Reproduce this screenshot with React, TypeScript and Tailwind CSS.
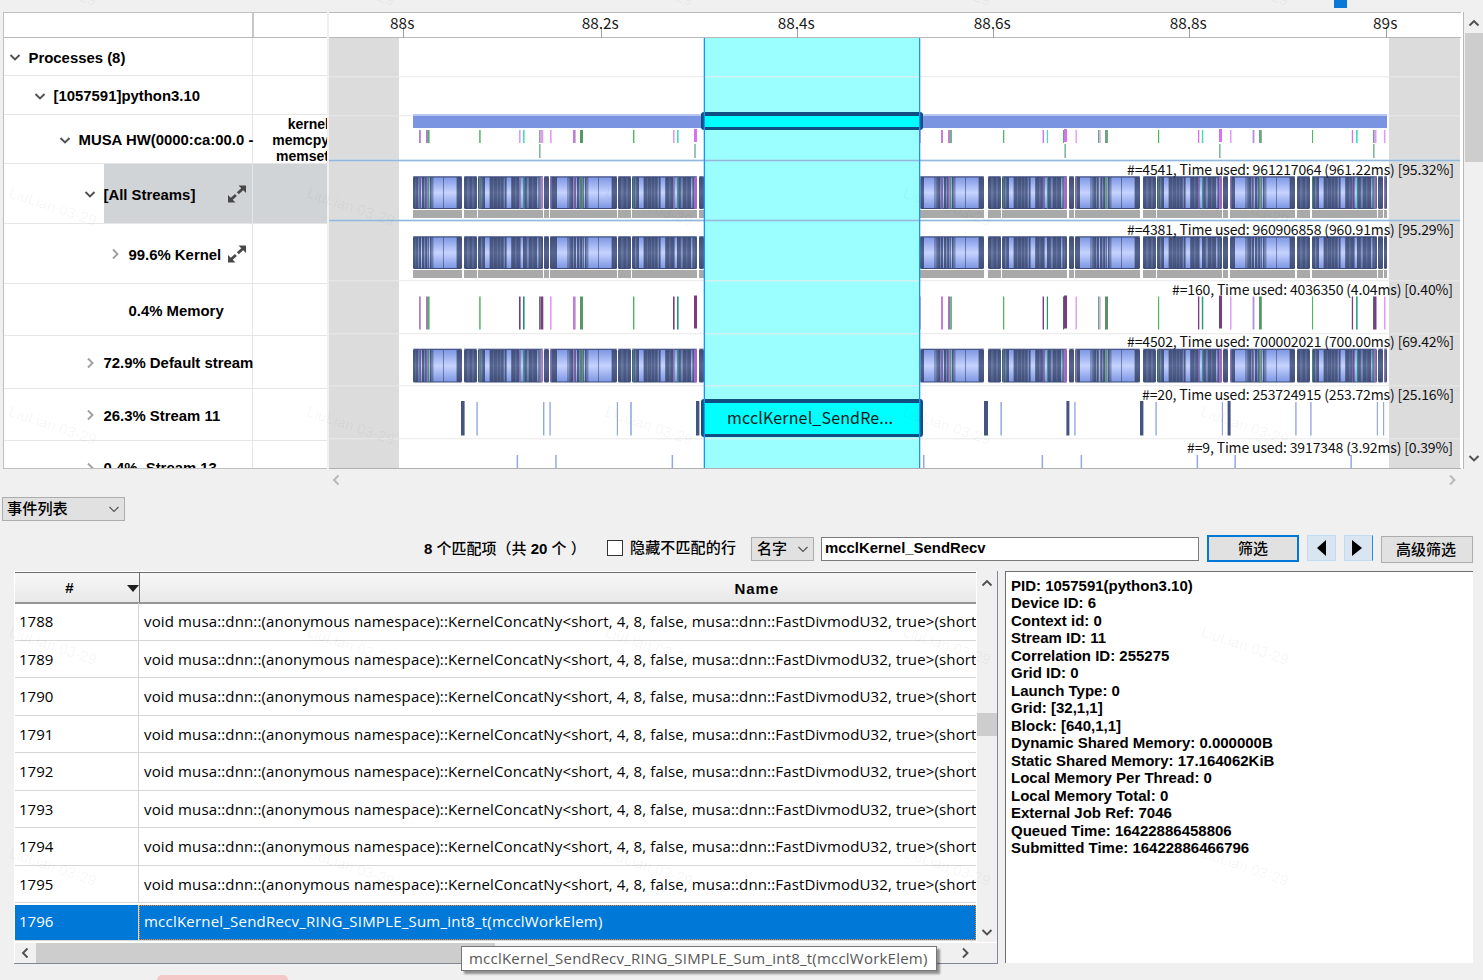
import React, { useState } from "react";

const bold = "font-['Liberation_Sans','Noto_Sans_CJK_SC',sans-serif] font-bold";
const segoe = "font-['Open_Sans','Noto_Sans_CJK_SC',sans-serif]";
const cjk = "font-['Liberation_Sans','Noto_Sans_CJK_SC',sans-serif]";

/* ---------- icons ---------- */

const chevronPaths = {
  down: "M1.5 4 L6 8.5 L10.5 4",
  up: "M1.5 8.5 L6 4 L10.5 8.5",
  left: "M8.5 1.5 L4 6 L8.5 10.5",
  right: "M4 1.5 L8.5 6 L4 10.5",
};

const Chevron: React.FC<{
  dir: keyof typeof chevronPaths;
  color?: string;
  width?: number;
}> = ({ dir, color = "#505050", width = 1.9 }) => (
  <svg width="12" height="12" viewBox="0 0 12 12" className="shrink-0">
    <path d={chevronPaths[dir]} fill="none" stroke={color} strokeWidth={width} />
  </svg>
);

const ExpandIcon = () => (
  <svg width="18" height="18" viewBox="0 0 18 18" className="shrink-0">
    <path d="M10.5 0.5 H18 V8 Z" fill="#484848" />
    <path d="M0 10 L7.5 17.5 H0 Z" fill="#484848" />
    <path d="M15 3.5 L3 14.5" stroke="#484848" strokeWidth="2.8" strokeDasharray="7 2.6" />
  </svg>
);

/* ---------- tree ---------- */

type TreeRow = {
  label: string;
  height: string;
  indent: string;
  arrow?: "down" | "right";
  selected?: boolean;
  expand?: boolean;
  tags?: string[];
};

const treeRows: TreeRow[] = [
  { label: "Processes (8)", height: "h-[38px]", indent: "pl-[5px]", arrow: "down" },
  { label: "[1057591]python3.10", height: "h-[39px]", indent: "pl-[30px]", arrow: "down" },
  {
    label: "MUSA HW(0000:ca:00.0 -",
    height: "h-[49px]",
    indent: "pl-[55px]",
    arrow: "down",
    tags: ["kernel", "memcpy", "memset"],
  },
  { label: "[All Streams]", height: "h-[60px]", indent: "pl-[80px]", arrow: "down", selected: true, expand: true },
  { label: "99.6% Kernel", height: "h-[60px]", indent: "pl-[105px]", arrow: "right", expand: true },
  { label: "0.4% Memory", height: "h-[52px]", indent: "pl-[105px]" },
  { label: "72.9% Default stream", height: "h-[53px]", indent: "pl-[80px]", arrow: "right" },
  { label: "26.3% Stream 11", height: "h-[52px]", indent: "pl-[80px]", arrow: "right" },
  { label: "0.4%  Stream 13", height: "h-[53px]", indent: "pl-[80px]", arrow: "right" },
];

const Tree = () => (
  <div className="w-[324px] h-[457px] ml-[3px] shrink-0 flex flex-col bg-white border-l border-t border-b border-[#c0c0c0] overflow-hidden">
    <div className="h-[25px] shrink-0 flex border-b border-[#b9b9b9]">
      <div className="w-[250px] border-r-2 border-[#c8c8c8]" />
    </div>
    {treeRows.map((row) => (
      <div key={row.label} className={`${row.height} shrink-0 flex border-b border-[#e6e6e6]`}>
        <div
          className={`w-[249px] shrink-0 flex items-center border-r border-[#e6e6e6] pt-[3px] ${row.indent} ${
            row.selected ? "bg-linear-to-r from-white from-[100px] to-[#d0d4d7] to-[100px]" : ""
          }`}
        >
          <div className="w-[19.5px] shrink-0 flex -mt-[2px]">
            {row.arrow && <Chevron dir={row.arrow} color={row.arrow === "down" ? "#505050" : "#a0a0a0"} />}
          </div>
          <span className={`${bold} text-[14.9px] whitespace-pre`}>{row.label}</span>
          {row.expand && (
            <div className="ml-auto mr-[6px] -mt-[2px]">
              <ExpandIcon />
            </div>
          )}
        </div>
        <div
          className={`flex-1 flex flex-col items-end justify-center pt-[2px] overflow-hidden ${
            row.selected ? "bg-[#d0d4d7]" : ""
          }`}
        >
          {row.tags?.map((tag) => (
            <span key={tag} className={`${bold} text-[14px] leading-[16px] -mr-[2px]`}>
              {tag}
            </span>
          ))}
        </div>
      </div>
    ))}
  </div>
);

/* ---------- timeline ---------- */

type Band = [number, number, "light" | "mid" | "faint"];

// repeating kernel patterns, offsets from the start of a group
const longBands: Band[] = [
  [7, 10, "light"], [17, 2.6, "mid"], [20.2, 1, "faint"], [23, 1, "mid"], [26, 1, "light"],
  [29, 1.2, "mid"], [32, 1.4, "mid"], [34, 1, "light"], [36.4, 1.4, "mid"], [38.3, 10, "light"], [49, 12.6, "light"],
];
const midBands: Band[] = [
  [3.3, 1, "mid"], [7, 4.6, "light"], [15, 1, "faint"], [19, 1, "faint"], [22, 1.2, "faint"], [25.6, 1.4, "mid"],
  [28.6, 4.6, "light"], [37, 1.6, "faint"], [42.6, 2.4, "light"], [48.8, 2, "mid"], [54, 1.4, "faint"],
  [59.2, 1.2, "light"], [61.8, 1.2, "faint"],
];
const shortBands: Band[] = [[3, 2.5, "faint"], [8, 2, "faint"]];
const noBands: Band[] = [];

type Group = { x: number; end: number; from: number; bands: Band[] };

const groups: Group[] = [
  { x: 413, end: 462, from: 395, bands: longBands },
  { x: 464, end: 477, from: 464, bands: shortBands },
  { x: 478, end: 543, from: 478, bands: midBands },
  { x: 544, end: 549, from: 544, bands: noBands },
  { x: 550, end: 617, from: 550, bands: longBands },
  { x: 618, end: 631, from: 618, bands: shortBands },
  { x: 632, end: 697, from: 632, bands: midBands },
  { x: 699, end: 704, from: 699, bands: noBands },
  { x: 920, end: 984, from: 917, bands: longBands },
  { x: 988, end: 1001, from: 988, bands: shortBands },
  { x: 1002, end: 1067, from: 1002, bands: midBands },
  { x: 1069, end: 1074, from: 1069, bands: noBands },
  { x: 1075, end: 1140, from: 1073, bands: longBands },
  { x: 1143, end: 1156, from: 1143, bands: shortBands },
  { x: 1157, end: 1222, from: 1157, bands: midBands },
  { x: 1223, end: 1228, from: 1223, bands: noBands },
  { x: 1230, end: 1295, from: 1228, bands: longBands },
  { x: 1297, end: 1310, from: 1297, bands: shortBands },
  { x: 1312, end: 1377, from: 1312, bands: midBands },
  { x: 1378, end: 1383, from: 1378, bands: noBands },
  { x: 1384, end: 1387, from: 1384, bands: noBands },
];

// [x, width, colour in the memory row, colour in the memcpy row]
type Tick = [number, number, string, string];

const V = "#7b3c87";
const P = "#e29bf5";
const G = "#4cb85e";
const T = "#249274";
const C = "#3fe0b5";
const M = "#da6ef5";

const memoryTicks: Tick[] = [
  [419, 1.8, "#ab82c9", "#ab82c9"], [426, 2, "#9d7eb0", "#b07ac8"], [428, 1.6, G, G], [479, 1.8, "#6dc27b", "#6dc27b"],
  [519, 1.6, V, P], [523, 1.6, T, C], [539, 1.6, "#5a7d66", "#7fae8a"], [540.6, 2.7, V, P], [550, 1.6, P, P],
  [573, 2.6, "#bf7fd8", "#bf7fd8"], [580, 3, "#579866", "#579866"], [633, 1.4, G, G], [673, 1.6, V, P],
  [677, 1.6, T, C], [694, 3, V, M], [920, 1, P, P], [941, 2, "#c47dda", "#c47dda"], [948, 2, "#a772bb", "#c47dda"],
  [950, 2, "#6bb97c", "#6bb97c"], [1003, 1.3, G, G], [1042.6, 1.4, V, M], [1046.8, 1.2, T, C],
  [1063, 1.2, "#45744d", G], [1064, 3, V, M], [1075.5, 1.4, P, P], [1098, 1.2, G, G], [1099.2, 1.5, P, P],
  [1105, 3, "#5a9169", "#6fa67f"], [1158, 1.2, G, G], [1198, 1.3, V, M], [1201.8, 1.5, "#2a9e80", C],
  [1219, 3, V, M], [1230, 1.5, P, P], [1252.6, 1.8, "#b590d8", "#b590d8"], [1259, 2.8, "#579866", "#6fa67f"],
  [1312, 1.1, G, G], [1351.8, 1.3, V, M], [1356, 1.7, "#35a88a", C], [1373, 1.2, "#45744d", G],
  [1374, 2.5, V, P], [1384, 1.5, P, P],
];

const memsetTicks = [539, 694.2, 1064.4, 1219, 1373];

// [x, width, dark bar]
const stream11: [number, number, boolean][] = [
  [461, 3.6, true], [476.4, 1.4, false], [543, 1.4, false], [549.4, 1.4, false], [616.8, 1.2, false],
  [630.2, 1.6, false], [696, 3.4, true], [984, 4, true], [1000.4, 1.5, false], [1066.4, 3, true],
  [1074.2, 1.4, false], [1140, 3.4, true], [1155.4, 1.4, false], [1221.8, 1.2, false], [1227.6, 3, true],
  [1295.2, 1.4, false], [1310.2, 1.4, false], [1376.8, 1.2, false], [1383, 1.2, false],
];

const stream13 = [516.6, 555.2, 671.6, 923, 1041.6, 1080.6, 1196.6, 1234.4, 1350.4];

const axis: [string, number][] = [
  ["88s", 403],
  ["88.2s", 601],
  ["88.4s", 797],
  ["88.6s", 993],
  ["88.8s", 1189],
  ["89s", 1386],
];

const stats: [string, number, number, number][] = [
  ["#=4541, Time used: 961217064 (961.22ms) [95.32%]", 1127, 174.5, 327],
  ["#=4381, Time used: 960906858 (960.91ms) [95.29%]", 1127, 234.5, 327],
  ["#=160, Time used: 4036350 (4.04ms) [0.40%]", 1172, 294.5, 281],
  ["#=4502, Time used: 700002021 (700.00ms) [69.42%]", 1127, 347, 327],
  ["#=20, Time used: 253724915 (253.72ms) [25.16%]", 1142, 400, 312],
  ["#=9, Time used: 3917348 (3.92ms) [0.39%]", 1187, 452.5, 266],
];

const KernelRow: React.FC<{ y: number; h: number; ticks?: boolean; idle?: boolean }> = ({ y, h, ticks, idle }) => (
  <g>
    {groups.map((g) => (
      <g key={g.x}>
        <rect x={g.x} y={y} width={g.end - g.x} height={h} rx="1.5" fill="url(#dark)" />
        {g.bands.map(([offset, w, kind]) => {
          const x = g.from + offset;
          if (x < g.x) return null;
          return (
            <rect
              key={offset}
              x={x}
              y={y + 1}
              width={w}
              height={h - 2}
              fill="url(#light)"
              opacity={kind === "light" ? 1 : kind === "mid" ? 0.5 : 0.18}
            />
          );
        })}
        <rect x={g.x} y={y - 0.5} width={g.end - g.x} height="1" fill="#5b6a9c" opacity="0.7" />
        {idle && <rect x={g.x} y={y + h + 1} width={g.end - g.x} height="8" fill="#a9a9a9" />}
      </g>
    ))}
    {ticks &&
      memoryTicks.map(([x, w, , color]) => (
        <rect key={x} x={x} y={y + 0.5} width={w} height={h - 0.5} fill={color} opacity={w > 2.6 ? 0.6 : 0.4} />
      ))}
  </g>
);

const Timeline = () => (
  <svg
    width="1132"
    height="457"
    viewBox="329 12 1132 457"
    className="shrink-0 ml-[2px] font-['Noto_Sans_CJK_SC',sans-serif]"
  >
    <defs>
      <linearGradient id="light" x1="0" y1="0" x2="0" y2="1">
        <stop offset="0" stopColor="#7f98e4" />
        <stop offset="0.5" stopColor="#c6d3ff" />
        <stop offset="1" stopColor="#7f98e4" />
      </linearGradient>
      <linearGradient id="dark" x1="0" y1="0" x2="0" y2="1">
        <stop offset="0" stopColor="#3f4d76" />
        <stop offset="0.5" stopColor="#55658f" />
        <stop offset="1" stopColor="#3f4d76" />
      </linearGradient>
    </defs>
    <rect x="329" y="12" width="1132" height="457" fill="#ffffff" />
    <rect x="329" y="38" width="70" height="430" fill="#dcdcdc" />
    <rect x="1389" y="38" width="71" height="430" fill="#dcdcdc" />
    <rect x="704" y="38" width="216" height="430" fill="#9bffff" />

    {/* ruler */}
    <rect x="329" y="12" width="1132" height="1" fill="#b9b9b9" />
    <rect x="329" y="37" width="1132" height="1" fill="#b9b9b9" />
    {axis.map(([label, x]) => (
      <g key={label}>
        <rect x={x} y="27" width="1" height="11" fill="#a0a0a0" />
        <text x={x - 0.8} y="28.5" fontSize="15.4" textAnchor="middle" fill="#1a1a1a">
          {label}
        </text>
      </g>
    ))}

    {/* row separators */}
    {[76, 115, 280, 333, 385, 438].map((y) => (
      <rect key={y} x="329" y={y} width="1131" height="1.4" fill="#e8e8e8" fillOpacity="0.75" />
    ))}
    {[160, 220].map((y) => (
      <g key={y}>
        <rect x="329" y={y - 1} width="1131" height="3" fill="#a9cdea" fillOpacity="0.45" />
        <rect x="329" y={y} width="1131" height="1" fill="#92b9dc" />
      </g>
    ))}

    {/* hardware row */}
    <rect x="413" y="114" width="974" height="2" fill="#b9c6ee" />
    <rect x="413" y="116" width="974" height="12" fill="#7a94e2" />
    {memoryTicks.map(([x, w, , color]) => (
      <rect key={x} x={x} y={color === M && w > 2 ? 129 : 130} width={w} height="13" fill={color} />
    ))}
    {memsetTicks.map((x) => (
      <rect key={x} x={x} y="144" width="1.6" height="14" fill="#84b59c" />
    ))}

    <KernelRow y={176.5} h={32.5} ticks idle />
    <KernelRow y={236.5} h={32.5} idle />
    <KernelRow y={349} h={33.5} ticks />

    {memoryTicks.map(([x, w, color]) => (
      <rect key={x} x={x} y={w > 2.9 && color === V ? 295.5 : 296.5} width={w} height="33" fill={color} />
    ))}
    {stream11.map(([x, w, dark]) => (
      <rect key={x} x={x} y={dark ? 401 : 402} width={w} height={dark ? 34.5 : 33.5} fill={dark ? "#465580" : "#93a9e6"} />
    ))}
    {stream13.map((x) => (
      <rect key={x} x={x} y="455" width="1.5" height="13" fill="#93a9e6" />
    ))}

    {/* selected kernel */}
    <rect x="701" y="112" width="222" height="18" rx="3" fill="#104f82" />
    <rect x="705" y="116" width="214" height="11" fill="#00ffff" />
    <rect x="701" y="399" width="222" height="38" rx="3" fill="#104f82" />
    <rect x="705" y="403" width="214" height="31" fill="#00ffff" />
    <rect x="703.7" y="38" width="1.3" height="430" fill="#1e90ff" />
    <rect x="919" y="38" width="1.3" height="430" fill="#1e90ff" />
    <text x="727" y="424" fontSize="16" textLength="166" fill="#0a1a1a">
      mcclKernel_SendRe...
    </text>

    {stats.map(([label, x, y, length]) => (
      <text key={label} x={x} y={y} fontSize="14" textLength={length} fill="#101010">
        {label}
      </text>
    ))}
    <rect x="329" y="468" width="1132" height="1" fill="#b0b0b0" />
  </svg>
);

/* ---------- event table ---------- */

const ids = [1788, 1789, 1790, 1791, 1792, 1793, 1794, 1795];
const concatName =
  "void musa::dnn::(anonymous namespace)::KernelConcatNy<short, 4, 8, false, musa::dnn::FastDivmodU32, true>(short";
const mcclName = "mcclKernel_SendRecv_RING_SIMPLE_Sum_int8_t(mcclWorkElem)";

const EventTable = () => {
  const [selected, setSelected] = useState(1796);
  const rows = [...ids.map((id) => ({ id, name: concatName })), { id: 1796, name: mcclName }];

  return (
    <div className="w-[984px] h-[393px] ml-[14px] shrink-0 flex flex-col bg-white border-r border-b border-[#82879a]">
      <div className="h-[371px] flex">
        <div className="w-[962px] pl-px shrink-0 flex flex-col">
          <div
            className={`mt-px h-[32px] shrink-0 flex border-t border-b-2 border-t-[#6e6e6e] border-b-[#959595] bg-linear-to-b from-[#f7f7f7] to-[#e9e9e9] ${bold}`}
          >
            <div className="w-[125px] flex items-center justify-center border-r border-[#6e6e6e] text-[15px] relative pr-[15px] pt-[2px]">
              #
              <svg width="12" height="7" viewBox="0 0 12 7" className="absolute right-0 top-[12px]">
                <path d="M0 0 H12 L6 7 Z" fill="#202020" />
              </svg>
            </div>
            <div className="flex-1 text-[15px] tracking-[0.9px] flex items-center pl-[594.5px] pt-[3px]">Name</div>
          </div>
          <div className="-mt-px">
            {rows.map(({ id, name }) => {
              const active = id === selected;
              return (
                <div
                  key={id}
                  onClick={() => setSelected(id)}
                  className={`h-[37.5px] flex items-center text-[15px] cursor-default border-b border-[#d6d6d6] ${segoe} ${
                    active ? "bg-[#0078d7] text-white border-t-2 border-t-white" : "text-black"
                  }`}
                >
                  <div
                    className={`w-[124px] h-full pl-[4px] flex items-center shrink-0 border-r border-[#d6d6d6] ${
                      active ? "pb-[2px]" : ""
                    }`}
                  >
                    {id}
                  </div>
                  <div
                    className={`flex-1 h-full pl-[5px] flex items-center overflow-hidden whitespace-nowrap ${
                      active
                        ? "pb-[2px] tracking-[0.215px] outline-1 -outline-offset-1 outline-dotted outline-[#ff8728]"
                        : "tracking-[0.14px]"
                    }`}
                  >
                    {name}
                  </div>
                </div>
              );
            })}
          </div>
        </div>
        <div className="w-[20px] ml-px shrink-0 flex flex-col items-center bg-[#f0f0f0]">
          <div className="mt-[6px]">
            <Chevron dir="up" />
          </div>
          <div className="w-full h-[23px] mt-[124px] bg-[#cdcdcd]" />
          <div className="mt-auto mb-[4px]">
            <Chevron dir="down" />
          </div>
        </div>
      </div>
      <div className="mt-px ml-px h-[20px] flex items-center bg-[#f0f0f0] pl-[4px]">
        <Chevron dir="left" />
        <div className="w-[459px] h-full ml-[5px] bg-[#cdcdcd]" />
        <div className="ml-auto mr-[26px]">
          <Chevron dir="right" />
        </div>
      </div>
    </div>
  );
};

const details = [
  "PID: 1057591(python3.10)",
  "Device ID: 6",
  "Context id: 0",
  "Stream ID: 11",
  "Correlation ID: 255275",
  "Grid ID: 0",
  "Launch Type: 0",
  "Grid: [32,1,1]",
  "Block: [640,1,1]",
  "Dynamic Shared Memory: 0.000000B",
  "Static Shared Memory: 17.164062KiB",
  "Local Memory Per Thread: 0",
  "Local Memory Total: 0",
  "External Job Ref: 7046",
  "Queued Time: 16422886458806",
  "Submitted Time: 16422886466796",
];

const Toolbar = () => {
  const [hideRows, setHideRows] = useState(false);
  const [query, setQuery] = useState("mcclKernel_SendRecv");

  return (
    <div className={`h-[28px] mt-[14px] shrink-0 flex items-start text-[15px] text-black ${cjk} font-medium`}>
      <span className="ml-[424px] w-[183px] leading-[27px] whitespace-nowrap">
        <b>8</b> 个匹配项（共 <b>20</b> 个 ）
      </span>
      <button
        onClick={() => setHideRows(!hideRows)}
        className="w-[16px] h-[16px] mt-[5px] shrink-0 border border-[#333333] bg-white text-[12px] leading-[14px]"
      >
        {hideRows ? "✓" : ""}
      </button>
      <span className="ml-[7px] w-[121px] leading-[26px] tracking-[0.15px] whitespace-nowrap">隐藏不匹配的行</span>
      <div className="w-[63px] h-[24px] mt-[2px] pl-[5px] pr-[4px] flex items-center justify-between bg-[#e1e1e1] border border-[#adadad]">
        名字
        <Chevron dir="down" width={1.1} />
      </div>
      <input
        value={query}
        onChange={(e) => setQuery(e.target.value)}
        className={`w-[378px] h-[24px] mt-[2px] ml-[7px] pl-[3px] pb-[2px] bg-white border border-[#7a7a7a] text-[14.9px] outline-none ${bold}`}
      />
      <button className="w-[92px] h-[27px] ml-[8px] border-2 border-[#0078d7] bg-[#e1e1e1] leading-[22px]">筛选</button>
      <button className="w-[29px] h-[26px] ml-[8px] flex items-center justify-center bg-[#d9e6f1] border border-[#c0dcf3]">
        <svg width="9" height="16" viewBox="0 0 9 16">
          <path d="M9 0 V16 L0 8 Z" />
        </svg>
      </button>
      <button className="w-[29px] h-[26px] ml-[8px] pr-[3px] flex items-center justify-center bg-[#d9e6f1] border border-[#c0dcf3] border-r-[#2a8ad8]">
        <svg width="10" height="16" viewBox="0 0 10 16">
          <path d="M0 0 V16 L10 8 Z" />
        </svg>
      </button>
      <button className="w-[92px] h-[27px] mt-px ml-[8px] pr-[2px] bg-[#e1e1e1] border border-[#adadad] leading-[22px]">
        高级筛选
      </button>
    </div>
  );
};

const Watermark = () => (
  <svg width="1483" height="980" className="absolute inset-0 pointer-events-none font-['Liberation_Sans',sans-serif]">
    {[-23, 197, 416, 636, 857].map((y) =>
      [8, 306, 604, 902, 1200].map((x) => (
        <text
          key={`${x}-${y}`}
          transform={`translate(${x} ${y}) rotate(18.5)`}
          fontSize="15"
          textLength="91"
          fill="#000000"
          fillOpacity="0.05"
        >
          LiuLian 03-29
        </text>
      ))
    )}
  </svg>
);

const App: React.FC = () => {
  return (
    <div className="relative w-[1483px] h-[980px] overflow-hidden bg-[#f0f0f0] flex flex-col text-black">
      {/* Overview handle */}
      <div className="h-[12px] shrink-0 flex">
        <div className="w-[13px] h-[8px] ml-[1334px] bg-[#0a78d6]" />
      </div>

      {/* Timeline */}
      <div className="h-[457px] shrink-0 flex">
        <Tree />
        <Timeline />
        <div className="w-[3px] shrink-0 border-r border-[#b9b9b9] mr-px bg-white" />
        <div className="flex-1 flex flex-col items-center">
          <div className="mt-[5px] mb-[4px]">
            <Chevron dir="up" />
          </div>
          <div className="w-full h-[129px] bg-[#cdcdcd]" />
          <div className="mt-auto mb-[5px]">
            <Chevron dir="down" />
          </div>
        </div>
      </div>
      <div className="h-[28px] shrink-0 flex items-center justify-between pl-[330px] pr-[25px] pb-[6px]">
        <Chevron dir="left" color="#b8b8b8" />
        <Chevron dir="right" color="#b8b8b8" />
      </div>

      {/* View selector */}
      <div
        className={`w-[123px] h-[24px] ml-[2px] shrink-0 pl-[4px] pr-[4px] flex items-center justify-between bg-[#e1e1e1] border border-[#adadad] text-[15.2px] font-medium ${cjk}`}
      >
        事件列表
        <Chevron dir="down" width={1.1} />
      </div>

      <Toolbar />

      {/* Events */}
      <div className="mt-[8px] flex">
        <EventTable />
        <div
          className={`w-[468px] h-[392px] ml-[7px] pl-[5px] pt-[5px] bg-white border-l border-t border-[#6e6e6e] text-[15px] leading-[17.47px] ${bold}`}
        >
          {details.map((line) => (
            <div key={line}>{line}</div>
          ))}
        </div>
      </div>

      <div className="w-[131px] h-[5px] mt-auto ml-[157px] shrink-0 rounded-t-[5px] bg-[#f3c8c6]" />

      <Watermark />

      {/* Tooltip */}
      <div
        className={`absolute left-[461px] top-[946px] w-[476px] h-[25px] pl-[7px] flex items-center bg-white border border-[#767676] text-[15px] tracking-[0.215px] text-[#575757] whitespace-nowrap shadow-[3px_3px_2px_rgba(0,0,0,0.4)] ${segoe}`}
      >
        {mcclName}
      </div>
    </div>
  );
};

export default App;
